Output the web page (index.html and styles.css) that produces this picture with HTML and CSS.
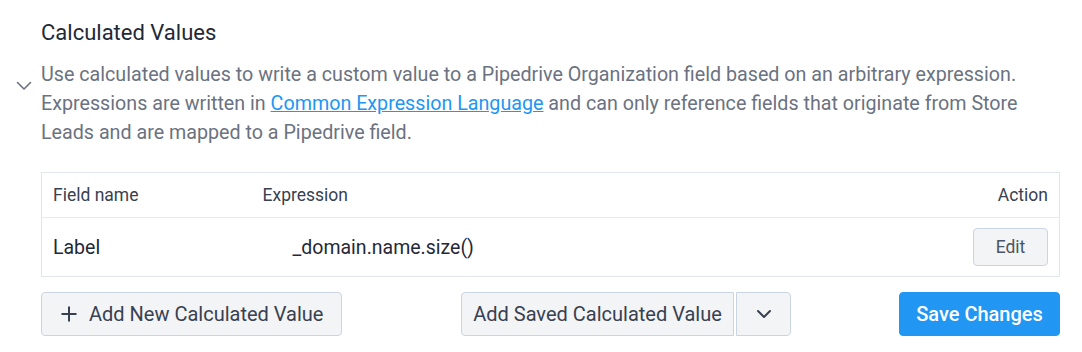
FILE: index.html
```html
<!DOCTYPE html>
<html lang="en">
<head>
    <meta charset="UTF-8">
    <meta name="viewport" content="width=device-width, initial-scale=1.0">
    <title>Calculated Values</title>
    <link rel="stylesheet" href="styles.css">
</head>
<body>
    <div class="panel">
        <div class="toggle">
            <svg width="16" height="10" viewBox="0 0 16 10" fill="none" stroke="#6b7280" stroke-width="1.6" stroke-linecap="round" stroke-linejoin="round">
                <path d="M1.5 1.5L8 8l6.5-6.5"/>
            </svg>
        </div>
        <div class="content">
            <h2 class="title">Calculated Values</h2>
            <p class="desc">Use calculated values to write a custom value to a Pipedrive Organization field based on an arbitrary expression. Expressions are written in <a href="#">Common Expression Language</a> and can only reference fields that originate from Store Leads and are mapped to a Pipedrive field.</p>

            <table class="values">
                <thead>
                    <tr>
                        <th class="col-name">Field name</th>
                        <th class="col-expr">Expression</th>
                        <th class="col-action">Action</th>
                    </tr>
                </thead>
                <tbody>
                    <tr>
                        <td class="col-name">Label</td>
                        <td class="col-expr"><span class="expr">_domain.name.size()</span></td>
                        <td class="col-action"><button class="btn btn-small">Edit</button></td>
                    </tr>
                </tbody>
            </table>

            <div class="actions">
                <button class="btn btn-add">
                    <svg width="16" height="16" viewBox="0 0 16 16" stroke="#374151" stroke-width="2">
                        <path d="M8 0.5v15M0.5 8h15"/>
                    </svg>
                    Add New Calculated Value
                </button>
                <div class="split">
                    <button class="btn btn-saved">Add Saved Calculated Value</button>
                    <button class="btn btn-menu">
                        <svg width="16" height="10" viewBox="0 0 16 10" fill="none" stroke="#374151" stroke-width="2" stroke-linecap="round" stroke-linejoin="round">
                            <path d="M2 2l6 6 6-6"/>
                        </svg>
                    </button>
                </div>
                <button class="btn btn-primary">Save Changes</button>
            </div>
        </div>
    </div>
</body>
</html>
```

FILE: styles.css
```css
* {
    margin: 0;
    padding: 0;
    box-sizing: border-box;
}

body {
    font-family: Roboto, 'Liberation Sans', sans-serif;
    background-color: #fff;
    color: #1f2937;
}

.panel {
    display: flex;
    padding: 19px 22px 0 16px;
}

/* Collapse chevron */
.toggle {
    width: 25px;
    padding-top: 57px;
}

.content {
    flex: 1;
}

.title {
    font-size: 22px;
    font-weight: 400;
    line-height: 28px;
    color: #1f2937;
}

.desc {
    margin-top: 13px;
    font-size: 19.7px;
    line-height: 29px;
    color: #6b7280;
}

.desc a {
    color: #2196f3;
}

/* Table */
.values {
    width: 100%;
    margin-top: 25px;
    border-collapse: collapse;
    border: 1px solid #e2e5e9;
}

.values th {
    height: 45px;
    font-size: 17.5px;
    font-weight: 400;
    color: #374151;
    text-align: left;
    padding: 0 11px;
    border-bottom: 1px solid #e8eaed;
}

.values td {
    height: 59px;
    font-size: 19.5px;
    color: #1f2937;
    padding: 0 11px;
}

.col-name {
    width: 210px;
}

.values .col-action {
    text-align: right;
    width: 120px;
}

.expr {
    padding-left: 30px;
}

/* Buttons */
.btn {
    font-family: inherit;
    font-size: 20px;
    color: #374151;
    background-color: #f3f4f6;
    border: 1px solid #cbd5e1;
    border-radius: 4px;
    height: 44px;
    cursor: pointer;
}

.btn-small {
    font-size: 17.5px;
    height: 38px;
    width: 75px;
    color: #4b5563;
    vertical-align: middle;
}

.actions {
    display: flex;
    align-items: center;
    margin-top: 15px;
}

.btn-add {
    display: flex;
    align-items: center;
    gap: 12px;
    padding: 0 10px 0 19px;
    width: 301px;
}

.split {
    display: flex;
    gap: 2px;
    margin-left: 119px;
}

.btn-saved {
    width: 273px;
    border-radius: 4px 0 0 4px;
}

.btn-menu {
    width: 55px;
    border-radius: 0 4px 4px 0;
    display: flex;
    align-items: center;
    justify-content: center;
}

.btn-primary {
    margin-left: auto;
    width: 161px;
    background-color: #2196f3;
    border-color: #2196f3;
    color: #fff;
    font-weight: 500;
}
```
